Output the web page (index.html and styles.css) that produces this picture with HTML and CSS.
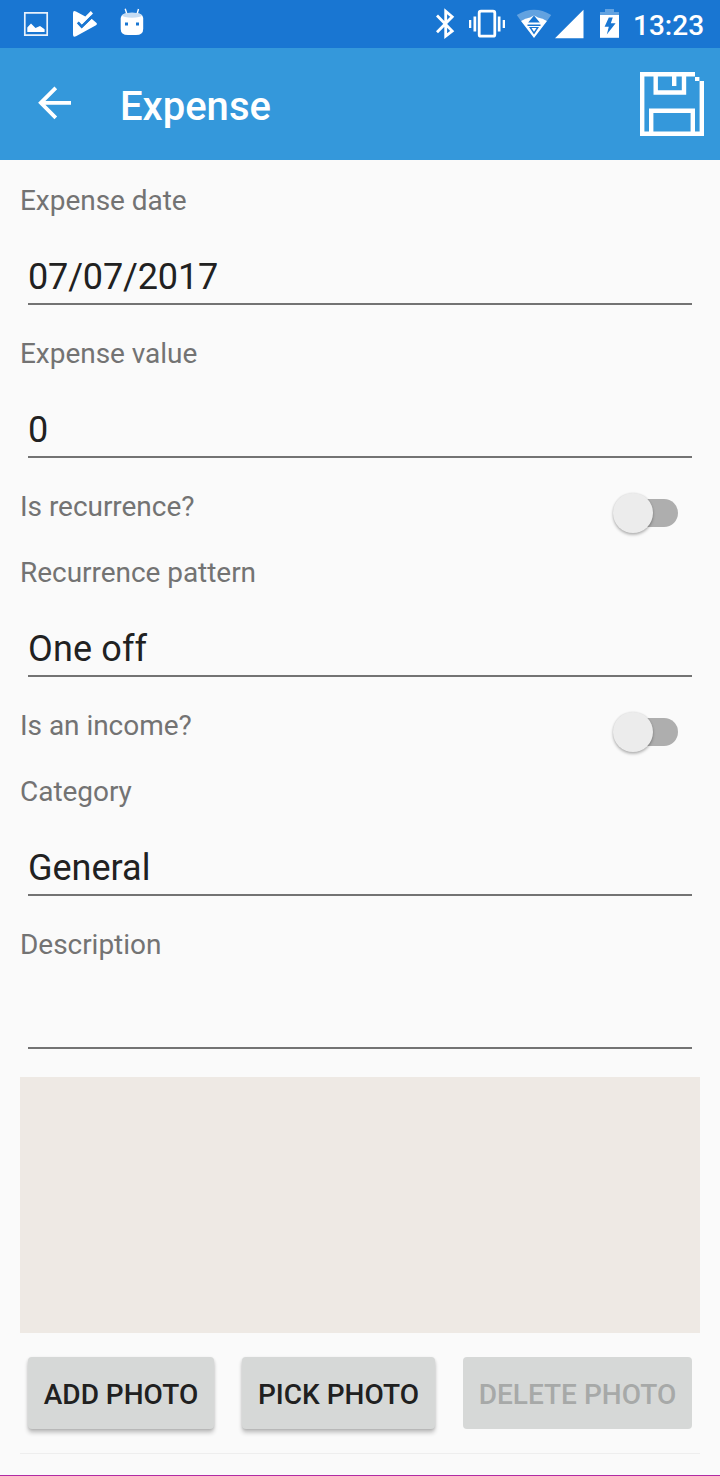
FILE: index.html
```html
<!DOCTYPE html>
<html lang="en">
<head>
<meta charset="utf-8">
<title>Expense</title>
<link rel="stylesheet" href="styles.css">
</head>
<body>
<div class="screen">
  <header class="status">
    <svg class="status-left" width="160" height="48" viewBox="0 0 160 48" fill="#fff" aria-hidden="true">
      <path d="M24.8 12.8H47.2V35.2H24.8Z" fill="none" stroke="#fff" stroke-width="1.7" opacity=".9"/>
      <path d="M27.3 32V27.5L31 23.6L35.5 28L40 26L44.6 29.2V32Z"/>
      <path d="M73 13.3Q73 10 76 11.6L85.3 16.6L90.8 11L93 13.6L81.8 25L79 22.2L77.6 23.6L81.8 28L91.6 18.8L96.3 22.7Q98 24 96 25.3L76 36.3Q73 37.8 73 34.5Z"/>
      <path d="M77.8 22.4L81.7 26.6L92 16.6" fill="none" stroke="#1976d2" stroke-width="2.6"/>
      <path d="M125.2 8.8L127.2 15M138.5 9L136.8 15" fill="none" stroke="#fff" stroke-width="1.4"/>
      <path d="M120.7 18Q121 12.8 132 12.8T143.2 18V29Q143.2 35 136 35H128Q120.7 35 120.7 29Z"/>
      <ellipse cx="132" cy="15.3" rx="9.8" ry="2.5" fill="#c5dcf3"/>
      <path d="M125 22.5h3v3h-3zM136 22.5h3v3h-3z" fill="#1976d2"/>
    </svg>
    <div class="status-right">
      <svg width="200" height="48" viewBox="430 0 200 48" fill="#fff" aria-hidden="true">
        <path d="M437 15.5L452.2 31L445.7 36.2V11.3L452.2 16.8L437 32.3" fill="none" stroke="#fff" stroke-width="2.8"/>
        <rect x="479.2" y="11.2" width="15.6" height="25" rx="1.8" fill="none" stroke="#fff" stroke-width="2.8"/>
        <path d="M469 20h2.3v8H469zM473.5 16.5h2.7v15h-2.7zM497.8 16.5h2.7v15h-2.7zM502.7 20h2.3v8h-2.3z"/>
        <path d="M516.8 15Q534 4.5 551.2 15L547 21Q534 13.5 521 21Z" opacity=".32"/>
        <path d="M521 21Q525 18.4 530 17.6L534 15.4L538 17.6Q543 18.4 547 21L534 38Z"/>
        <path d="M534 15.4L539.8 22.6H528.2ZM527.5 24.4H540.5V26H527.5ZM529 27H539L534 34.5Z" fill="#1976d2"/>
        <path d="M531.5 28H536.5L534 31.8Z"/>
        <path d="M555 38.3L583.5 9.8V38.3Z"/>
        <path d="M600 12H605V9H614V12H619V15H600Z" opacity=".32"/>
        <path d="M600 15H619V37.8H600Z"/>
        <path d="M612.8 17.5H608.8L604.6 26.8H608.8L606.8 34.5L615.6 23.2H610.8Z" fill="#1976d2"/>
      </svg>
      <time class="clock">13:23</time>
    </div>
  </header>

  <nav class="toolbar">
    <svg class="back" width="34" height="34" viewBox="38 86 34 34" aria-label="Back">
      <path d="M71 102.8H41M55.8 87.8L40.8 102.8L55.8 117.8" fill="none" stroke="#fff" stroke-width="3.8"/>
    </svg>
    <h1 class="title">Expense</h1>
    <svg class="save" width="64" height="64" viewBox="0 0 64 64" fill="none" stroke="#fff" stroke-width="4.4" aria-label="Save">
      <path d="M55 2.2H2.2V61.8H61.8V9"/>
      <path d="M15.7 4V20.5H44V4M11.2 62V38.7H52.8V62"/>
      <path d="M34.2 4V14"/>
      <path d="M55 5h4.4V9H55z" fill="#fff" stroke="none"/>
    </svg>
  </nav>

  <main class="form">
    <div class="field"><div class="label">Expense date</div><div class="value value-date">07/07/2017</div></div>
    <div class="field"><div class="label">Expense value</div><div class="value">0</div></div>
    <div class="toggle-row"><div class="label">Is recurrence?</div><div class="switch"><span class="thumb"></span></div></div>
    <div class="field"><div class="label">Recurrence pattern</div><div class="value value-pattern">One off</div></div>
    <div class="toggle-row"><div class="label">Is an income?</div><div class="switch"><span class="thumb"></span></div></div>
    <div class="field"><div class="label">Category</div><div class="value">General</div></div>
    <div class="field"><div class="label">Description</div><div class="value"></div></div>
    <div class="photo"></div>
    <div class="actions">
      <button class="btn btn-add">ADD PHOTO</button>
      <button class="btn btn-pick">PICK PHOTO</button>
      <button class="btn btn-delete" disabled>DELETE PHOTO</button>
    </div>
  </main>
</div>
</body>
</html>
```
FILE: styles.css
```css
* { box-sizing: border-box; }
body { margin: 0; font-family: Roboto, "Liberation Sans", sans-serif; }
svg { display: block; flex: none; }
.screen {
  width: 720px;
  height: 1476px;
  display: flex;
  flex-direction: column;
  overflow: hidden;
  background: #fafafa;
  border-bottom: 1px solid #b32aa3;
}
.status {
  height: 48px;
  display: flex;
  justify-content: space-between;
  background: #1976d2;
  color: #fff;
}
.status-right { display: flex; width: 290px; }
.clock {
  margin-left: 3px;
  font-size: 28px;
  font-weight: 500;
  line-height: 52px;
}
.toolbar {
  height: 112px;
  display: flex;
  align-items: center;
  padding: 0 16px 0 38px;
  background: #3498db;
  color: #fff;
}
.back { margin-top: -2px; }
.title {
  flex: 1;
  margin: 6px 0 0 48px;
  font-size: 40px;
  font-weight: 500;
  line-height: 48px;
}
.form { padding: 20px 20px 0; }
.field { height: 153px; }
.label {
  padding-top: 1px;
  font-size: 28px;
  line-height: 40px;
  letter-spacing: -0.04px;
  color: #737373;
}
.value {
  height: 49px;
  margin: 35px 8px 0;
  border-bottom: 2px solid #737373;
  font-size: 36px;
  line-height: 42px;
  color: #212121;
}
.value-date { letter-spacing: -0.15px; }
.value-pattern { letter-spacing: 0.15px; }
.toggle-row {
  height: 66px;
  display: flex;
  justify-content: space-between;
  align-items: flex-start;
}
.switch {
  width: 56px;
  height: 28px;
  margin: 13px 22px 0 0;
  border-radius: 14px;
  background: #aeaeae;
}
.thumb {
  display: block;
  width: 40px;
  height: 40px;
  margin: -6px 0 0 -9px;
  border-radius: 50%;
  background: #ececec;
  box-shadow: 0 2px 3px rgba(0, 0, 0, .26), 0 0 2px rgba(0, 0, 0, .12);
}
.photo { height: 256px; background: #eee9e4; }
.actions {
  display: flex;
  gap: 28px;
  height: 121px;
  padding: 24px 8px;
  border-bottom: 1px solid #eeeeee;
}
.btn {
  height: 72px;
  padding: 4px 0 0;
  border: 0;
  border-radius: 4px;
  background: #d6d8d7;
  box-shadow: 0 4px 4px rgba(0, 0, 0, .2), 0 1px 3px rgba(0, 0, 0, .14);
  font-family: inherit;
  font-size: 28px;
  font-weight: 500;
  line-height: 68px;
  white-space: nowrap;
  color: #202020;
}
.btn-add { width: 186px; }
.btn-pick { width: 193px; }
.btn-delete { width: 229px; color: #a7a9a8; box-shadow: none; }
```
